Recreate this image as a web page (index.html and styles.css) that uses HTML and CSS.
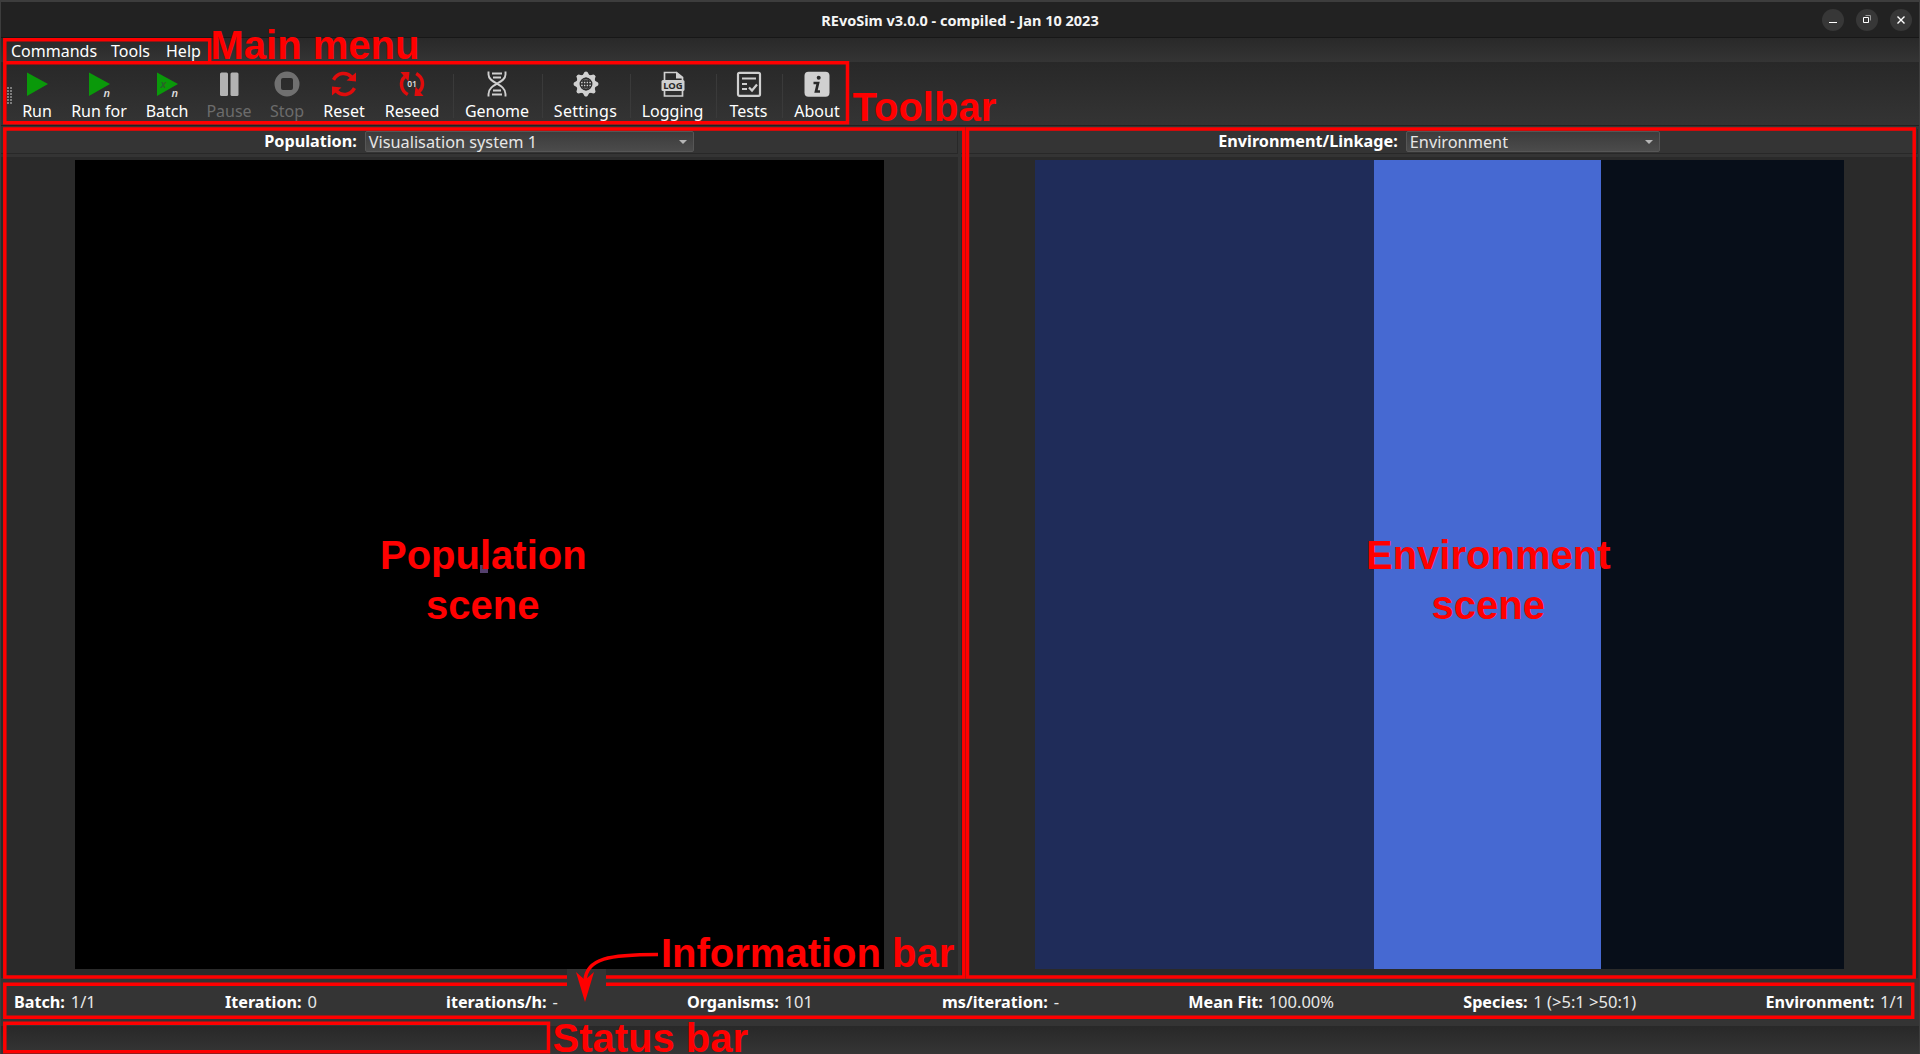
FILE: index.html
```html
<!DOCTYPE html>
<html lang="en">
<head>
<meta charset="utf-8">
<title>REvoSim v3.0.0</title>
<link rel="stylesheet" href="styles.css">
</head>
<body>
<div class="window">
  <header class="titlebar">
    <h1 class="title">REvoSim v3.0.0 - compiled - Jan 10 2023</h1>
    <div class="controls">
      <span class="control"><svg width="22" height="22"><path d="M7 13.5h8" stroke="#fff" fill="none"/></svg></span>
      <span class="control"><svg width="22" height="22" fill="none"><path d="M9.500 6.500h5v5" stroke="#999"/><path d="M7.500 8.500h5v5h-5z" stroke="#fff"/></svg></span>
      <span class="control"><svg width="22" height="22"><path d="M7.500 7.500l7 7M14.500 7.500l-7 7" stroke="#fff" stroke-width="1.400" fill="none"/></svg></span>
    </div>
  </header>
  <nav class="menubar"><span class="menu-commands">Commands</span><span class="menu-tools">Tools</span><span>Help</span></nav>
  <div class="toolbar">
    <span class="grip"></span>
    <div class="tool"><svg width="26" height="26"><path d="M3 1.500v23.500l21-12z" fill="#0a990a"/></svg><span>Run</span></div>
    <div class="tool"><svg width="26" height="26"><path d="M3 1.500v23.500l21-12z" fill="#0a990a"/><text class="glyph slanted" x="17.500" y="25.500">n</text></svg><span>Run for</span></div>
    <div class="tool"><svg width="26" height="26"><path d="M3 1.500v23.500l21-12z" fill="#0a990a"/><text class="glyph slanted leaf" x="6.500" y="17">x</text><text class="glyph slanted" x="17.500" y="25.500">n</text></svg><span>Batch</span></div>
    <div class="tool disabled"><svg width="26" height="26" fill="#b2b2b2"><rect x="4" y="1.500" width="8" height="23.500" rx="1.500"/><rect x="14.500" y="1.500" width="8" height="23.500" rx="1.500"/></svg><span>Pause</span></div>
    <div class="tool disabled"><svg width="26" height="26"><path fill="#707070" fill-rule="evenodd" d="M13 .5a12.500 12.500 0 1 0 0 25a12.500 12.500 0 1 0 0-25zM9 7h8q2 0 2 2v8q0 2-2 2h-8q-2 0-2-2v-8q0-2 2-2z"/></svg><span>Stop</span></div>
    <div class="tool"><svg width="26" height="26"><g id="arrows"><path d="M2.500 8.800C6.500 1.500 15.500.5 20.500 6" stroke="#e00c0c" stroke-width="3.500" fill="none"/><path d="M15.500 9.500l9.500 1V1.500z" fill="#e00c0c"/></g><use href="#arrows" transform="rotate(180 13 13)"/></svg><span>Reset</span></div>
    <div class="tool"><svg width="26" height="26"><use href="#arrows" transform="rotate(-90 13 13)"/><use href="#arrows" transform="rotate(90 13 13)"/><text class="glyph digits" x="13" y="16">01</text></svg><span>Reseed</span></div>
    <i class="divider"></i>
    <div class="tool"><svg width="26" height="26" fill="none" stroke="#d0d0d0" stroke-width="1.900"><path d="M4.500 .5v3c0 9 17 9 17 19.500v2.500M21.500 .5v3c0 9-17 9-17 19.500v2.500M8 2.500h10M9 6.500h8M9 19.500h8M8 23.500h10"/></svg><span>Genome</span></div>
    <i class="divider"></i>
    <div class="tool"><svg width="26" height="26"><g fill="#d0d0d0"><circle cx="13" cy="13" r="9.800"/><g id="teeth"><path id="tooth" d="M9.500 4.500L11.500 1q1.500-1 3 0l2 3.500z"/><use href="#tooth" transform="rotate(90 13 13)"/><use href="#tooth" transform="rotate(180 13 13)"/><use href="#tooth" transform="rotate(270 13 13)"/></g><use href="#teeth" transform="rotate(45 13 13)"/></g><g stroke="#2c2c2c" fill="none" stroke-width="1.300"><circle cx="13" cy="13" r="5.800"/><ellipse cx="13" cy="13" rx="2.800" ry="5.800"/><path d="M13 7v12M7 13h12M8 10h10M8 16h10"/></g></svg><span class="label-settings">Settings</span></div>
    <i class="divider"></i>
    <div class="tool"><svg width="26" height="26"><path d="M4.500 9V1.500h12l6 5v3M4.500 18v7h18v-7" stroke="#d0d0d0" stroke-width="1.700" fill="none"/><path d="M16 .5v7h7z" fill="#d0d0d0"/><rect x="1.500" y="9" width="23" height="11" rx="1.500" fill="#d0d0d0"/><text class="glyph log" x="13" y="17.800">LOG</text></svg><span>Logging</span></div>
    <i class="divider"></i>
    <div class="tool"><svg width="26" height="26" fill="none" stroke="#d0d0d0" stroke-width="2.200"><rect x="2" y="1.800" width="22" height="23" rx="1.500"/><path d="M6 7.500h14M6 13h5M6 18h5M13 16.500l3 3 5-6"/></svg><span>Tests</span></div>
    <i class="divider"></i>
    <div class="tool"><svg width="26" height="26"><rect x=".5" y=".8" width="25" height="25" rx="4" fill="#d0d0d0"/><circle cx="14.700" cy="6.800" r="2" fill="#292929"/><path d="M9.500 12h4.500l-2 8.500h4" stroke="#292929" stroke-width="2.700" fill="none"/></svg><span>About</span></div>
  </div>
  <main class="panels">
    <section class="panel">
      <div class="panel-head"><b>Population:</b><div class="combo combo-wide"><span>Visualisation system 1</span><i class="arrow"></i></div></div>
      <div class="view"><div class="scene population"><i class="organism"></i></div></div>
    </section>
    <section class="panel">
      <div class="panel-head"><b>Environment/Linkage:</b><div class="combo"><span>Environment</span><i class="arrow"></i></div></div>
      <div class="view"><div class="scene environment"></div></div>
    </section>
  </main>
  <div class="infobar">
    <span><b>Batch:</b> 1/1</span><span><b>Iteration:</b> 0</span><span><b>iterations/h:</b> -</span><span><b>Organisms:</b> 101</span><span><b>ms/iteration:</b> -</span><span><b>Mean Fit:</b> 100.00%</span><span><b>Species:</b> 1 (&gt;5:1 &gt;50:1)</span><span><b>Environment:</b> 1/1</span>
  </div>
  <footer class="statusbar"></footer>
</div>
<svg class="annotations" width="1920" height="1054" viewBox="0 0 1920 1054">
  <g fill="none" stroke="#f00" stroke-width="3.500">
    <path d="M4.800 62.800V39.800H209.700V62.800"/>
    <path d="M4.800 62.800H847.500V122.700H4.800z"/>
    <path d="M4.800 129H963.800V977H4.800z"/>
    <path d="M967.500 129H1914.200V977H967.500z"/>
    <path d="M4.800 984.300H1912.700V1017.300H4.800z"/>
    <path d="M4.800 1023.300H548.500V1051.700H4.800z"/>
  </g>
  <path d="M567 969h39v18h-39z" fill="#343434"/>
  <path d="M658 954.500C610 954.500 586 958 585 981" stroke="#f00" stroke-width="3.500" fill="none"/>
  <path d="M576 972l9 8 9-8-9 30z" fill="#f00"/>
  <g class="callouts">
    <text x="210.500" y="59.300">Main menu</text>
    <text x="852.500" y="120.700">Toolbar</text>
    <text x="380" y="569.300">Population</text>
    <text x="426" y="619.300">scene</text>
    <text x="1366" y="569.300">Environment</text>
    <text x="1431.500" y="619.300">scene</text>
    <text x="661" y="967.300">Information bar</text>
    <text x="552.500" y="1051.500">Status bar</text>
  </g>
</svg>
</body>
</html>
```
FILE: styles.css
```css
* { box-sizing: border-box; }
body {
  margin: 0;
  background: #343434;
  color: #fff;
  font: 16px/20px "Noto Sans", sans-serif;
  overflow: hidden;
}
.window {
  width: 1920px;
  height: 1054px;
  display: flex;
  flex-direction: column;
  border-top: 2px solid #3d3d3d;
  border-left: 1px solid #3d3d3d;
  border-right: 1px solid #3d3d3d;
}
.titlebar {
  height: 36px;
  flex: none;
  display: grid;
  grid-template-columns: 1fr auto 1fr;
  align-items: center;
  background: #222;
  border-bottom: 1px solid #171717;
}
.title {
  grid-column: 2;
  margin: 0;
  font-size: 14.5px;
  line-height: 20px;
  color: #f5f5f5;
}
.controls { display: flex; gap: 12px; justify-content: flex-end; padding-right: 7px; }
.control { width: 22px; height: 22px; border-radius: 50%; background: #373737; }
.control svg { display: block; }
.menubar {
  height: 24px;
  flex: none;
  display: flex;
  padding: 3px 0 0 10px;
  background: linear-gradient(#292929, #343434);
}
.menu-commands { width: 100px; }
.menu-tools { width: 55px; }
.toolbar {
  height: 64px;
  flex: none;
  display: grid;
  grid-template-columns: 12px 48px 76px 60px 64px 52px 62px 74px 7px 82px 7px 81px 7px 79px 7px 59px 7px 64px;
  padding-top: 9px;
  background: linear-gradient(#282828, #343434);
  border-bottom: 1px solid #222;
}
.grip {
  width: 5px;
  height: 17px;
  margin: 16px 0 0 6px;
  background:
    repeating-linear-gradient(90deg, transparent 0 2px, #2d2d2d 2px 3px),
    repeating-linear-gradient(#7d7d7d 0 2px, #2d2d2d 2px 3px);
}
.tool { display: flex; flex-direction: column; align-items: center; gap: 4px; white-space: nowrap; }
.tool svg { display: block; flex: none; overflow: visible; }
.label-settings { letter-spacing: .3px; }
.disabled { color: #6c6c6c; }
.divider { width: 1px; height: 44px; margin: 3px 0 0 4px; background: #3a3a3a; }
.glyph { fill: #ddd; font-size: 11px; font-weight: 600; }
.slanted { font-style: italic; }
.leaf { fill: #2b5f2b; }
.digits { font-size: 8.5px; text-anchor: middle; }
.log { fill: #292929; font-size: 9.5px; font-weight: bold; text-anchor: middle; }
.panels {
  height: 852px;
  flex: none;
  display: grid;
  grid-template-columns: 957px 957px;
  column-gap: 3px;
  padding-top: 3px;
}
.panel { display: flex; flex-direction: column; }
.panel-head {
  height: 25px;
  display: flex;
  justify-content: center;
  align-items: flex-start;
  gap: 8px;
  padding-top: 2px;
  border-bottom: 1px solid #282828;
  border-right: 1px solid #282828;
}
.panel-head b { font-size: 16.2px; line-height: 20px; }
.combo {
  width: 254px;
  height: 21px;
  display: flex;
  align-items: center;
  justify-content: space-between;
  padding: 0 6px 0 3px;
  border: 1px solid #565656;
  border-radius: 2px;
  background: linear-gradient(#3c3c3c, #4b4b4b);
  color: #e6e6e6;
  font-size: 16.3px;
}
.combo-wide { width: 329px; }
.arrow { border: 4px solid transparent; border-top-color: #b5b5b5; border-bottom: 0; }
.view {
  flex: 1;
  display: flex;
  justify-content: center;
  margin-top: 3px;
  padding-top: 3px;
  background: #2a2a2a;
}
.scene { width: 809px; height: 809px; }
.population { background: #000; display: grid; place-items: center; }
.organism { width: 8px; height: 8px; margin: 8px 0 0 8px; background: #54406e; }
.environment { background: linear-gradient(90deg, #1f2c59 339.5px, #4669d2 339.5px 566px, #070e19 566px); }
.infobar {
  height: 48px;
  flex: none;
  display: flex;
  justify-content: space-between;
  padding: 14px 14px 0 13px;
  color: #e8e8e8;
  font-size: 16.5px;
}
.infobar b { color: #fff; font-size: 16.2px; margin-right: 1.5px; }
.statusbar { flex: 1; background: linear-gradient(#282828, #353535); }
.annotations { position: absolute; left: 0; top: 0; }
.callouts { font: bold 40px "Liberation Sans", Arial, sans-serif; fill: #f00; }
```
